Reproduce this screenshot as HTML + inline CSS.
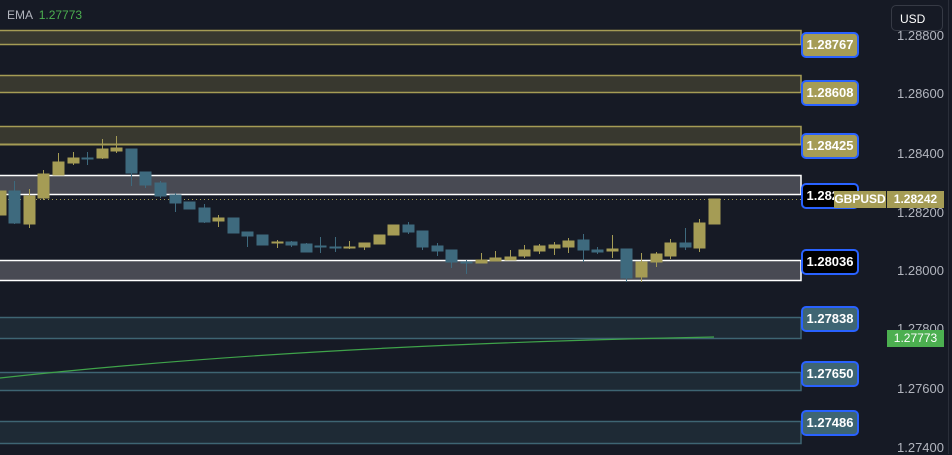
<!DOCTYPE html>
<html><head><meta charset="utf-8"><style>
html,body{margin:0;padding:0;background:#161a25;width:952px;height:454px;overflow:hidden;font-family:"Liberation Sans",sans-serif}
.lbl{position:absolute;left:801px;width:54px;height:22px;border:2px solid #2962ff;border-radius:5px;color:#fff;font-size:13px;font-weight:bold;line-height:22px;text-align:center}
.ax{position:absolute;left:897px;color:#b2b5be;font-size:13px}
</style></head><body>
<svg width="952" height="454" style="position:absolute;left:0;top:0">
<rect x="0" y="0" width="952" height="454" fill="#161a25"/>
<!-- bands -->
<g stroke-width="1.5">
<rect x="-2" y="30.5" width="803" height="14" fill="#38382f" stroke="#a59c55"/>
<rect x="-2" y="75.5" width="803" height="17" fill="#38382f" stroke="#a59c55"/>
<rect x="-2" y="126.5" width="803" height="18" fill="#38382f" stroke="#a59c55"/>
<rect x="-2" y="175.5" width="803" height="19" fill="#484a53" stroke="#ffffff"/>
<rect x="-2" y="260.5" width="803" height="20" fill="#484a53" stroke="#ffffff"/>
<rect x="-2" y="317.5" width="803" height="21" fill="#1e2a35" stroke="#3e6573"/>
<rect x="-2" y="372.5" width="803" height="18" fill="#1e2a35" stroke="#3e6573"/>
<rect x="-2" y="421.5" width="803" height="22" fill="#1e2a35" stroke="#3e6573"/>
</g>
<line x1="0" y1="144.5" x2="801" y2="144.5" stroke="#a59c55" stroke-width="2"/>
<line x1="0" y1="199.5" x2="834" y2="199.5" stroke="#a59c55" stroke-width="1" stroke-dasharray="1 3"/>
<!-- candles -->
<g fill="#a59c55" stroke="#a59c55" stroke-width="1">
<rect x="0" y="191" width="6" height="24"/>
<line x1="29.5" y1="189" x2="29.5" y2="228"/><rect x="24" y="196" width="11" height="28"/>
<line x1="43.5" y1="170" x2="43.5" y2="200"/><rect x="38" y="174" width="11" height="24"/>
<line x1="58.5" y1="153" x2="58.5" y2="175"/><rect x="53" y="162" width="11" height="13"/>
<line x1="73.5" y1="152" x2="73.5" y2="165"/><rect x="68" y="158" width="11" height="5"/>
<line x1="102.5" y1="139" x2="102.5" y2="159"/><rect x="97" y="149" width="11" height="9"/>
<line x1="116.5" y1="136" x2="116.5" y2="153"/><rect x="111" y="148" width="11" height="3"/>
<line x1="218.5" y1="215" x2="218.5" y2="227"/><rect x="213" y="218" width="11" height="3"/>
<line x1="277.5" y1="240" x2="277.5" y2="248"/><rect x="272" y="242" width="11" height="1"/>
<line x1="349.5" y1="241" x2="349.5" y2="249"/><rect x="344" y="247" width="11" height="1"/>
<line x1="364.5" y1="243" x2="364.5" y2="250"/><rect x="359" y="243" width="11" height="4"/>
<rect x="374" y="235" width="11" height="9"/>
<rect x="388" y="225" width="11" height="10"/>
<line x1="481.5" y1="253" x2="481.5" y2="263"/><rect x="476" y="260" width="11" height="3"/>
<line x1="495.5" y1="251" x2="495.5" y2="261"/><rect x="490" y="258" width="11" height="3"/>
<line x1="510.5" y1="250" x2="510.5" y2="260"/><rect x="505" y="257" width="11" height="3"/>
<line x1="524.5" y1="245" x2="524.5" y2="258"/><rect x="519" y="250" width="11" height="6"/>
<line x1="539.5" y1="244" x2="539.5" y2="254"/><rect x="534" y="246" width="11" height="5"/>
<line x1="554.5" y1="242" x2="554.5" y2="255"/><rect x="549" y="245" width="11" height="3"/>
<line x1="568.5" y1="238" x2="568.5" y2="253"/><rect x="563" y="241" width="11" height="6"/>
<line x1="612.5" y1="235" x2="612.5" y2="258"/><rect x="607" y="249" width="11" height="2"/>
<line x1="641.5" y1="253" x2="641.5" y2="282"/><rect x="636" y="262" width="11" height="15"/>
<line x1="656.5" y1="252" x2="656.5" y2="267"/><rect x="651" y="254" width="11" height="8"/>
<line x1="670.5" y1="239" x2="670.5" y2="259"/><rect x="665" y="243" width="11" height="13"/>
<line x1="699.5" y1="219" x2="699.5" y2="252"/><rect x="694" y="223" width="11" height="25"/>
<rect x="709" y="199" width="11" height="25"/>
</g>
<g fill="#3e6a7e" stroke="#3e6a7e" stroke-width="1">
<line x1="14.5" y1="181" x2="14.5" y2="224"/><rect x="9" y="191" width="11" height="32"/>
<line x1="87.5" y1="152" x2="87.5" y2="165"/><rect x="82" y="158" width="11" height="1"/>
<line x1="131.5" y1="149" x2="131.5" y2="186"/><rect x="126" y="149" width="11" height="24"/>
<line x1="145.5" y1="172" x2="145.5" y2="188"/><rect x="140" y="172" width="11" height="13"/>
<line x1="160.5" y1="181" x2="160.5" y2="198"/><rect x="155" y="183" width="11" height="13"/>
<line x1="175.5" y1="193" x2="175.5" y2="212"/><rect x="170" y="195" width="11" height="8"/>
<rect x="184" y="202" width="11" height="7"/>
<line x1="204.5" y1="204" x2="204.5" y2="223"/><rect x="199" y="208" width="11" height="14"/>
<rect x="228" y="218" width="11" height="15"/>
<line x1="247.5" y1="232" x2="247.5" y2="247"/><rect x="242" y="232" width="11" height="4"/>
<rect x="257" y="235" width="11" height="10"/>
<line x1="291.5" y1="241" x2="291.5" y2="247"/><rect x="286" y="242" width="11" height="3"/>
<line x1="306.5" y1="243" x2="306.5" y2="252"/><rect x="301" y="244" width="11" height="8"/>
<line x1="320.5" y1="237" x2="320.5" y2="253"/><rect x="315" y="246" width="11" height="1"/>
<line x1="335.5" y1="237" x2="335.5" y2="252"/><rect x="330" y="247" width="11" height="1"/>
<line x1="408.5" y1="222" x2="408.5" y2="234"/><rect x="403" y="225" width="11" height="7"/>
<line x1="422.5" y1="231" x2="422.5" y2="250"/><rect x="417" y="231" width="11" height="16"/>
<line x1="437.5" y1="243" x2="437.5" y2="256"/><rect x="432" y="246" width="11" height="5"/>
<line x1="451.5" y1="250" x2="451.5" y2="268"/><rect x="446" y="250" width="11" height="12"/>
<line x1="466.5" y1="260" x2="466.5" y2="274"/><rect x="461" y="262" width="11" height="1"/>
<line x1="583.5" y1="234" x2="583.5" y2="262"/><rect x="578" y="240" width="11" height="10"/>
<line x1="597.5" y1="247" x2="597.5" y2="254"/><rect x="592" y="250" width="11" height="2"/>
<line x1="626.5" y1="249" x2="626.5" y2="282"/><rect x="621" y="249" width="11" height="29"/>
<line x1="685.5" y1="228" x2="685.5" y2="250"/><rect x="680" y="243" width="11" height="4"/>
</g>
<path d="M0 378 Q300 345 714 337" fill="none" stroke="#3fa34a" stroke-width="1.2"/>
<line x1="948.5" y1="0" x2="948.5" y2="454" stroke="#2a2e39"/>
</svg>
<div class="lbl" style="top:32px;background:#a59c55">1.28767</div>
<div class="lbl" style="top:80px;background:#a59c55">1.28608</div>
<div class="lbl" style="top:133px;background:#a59c55">1.28425</div>
<div class="lbl" style="top:183px;background:#000">1.28250</div>
<div class="lbl" style="top:249px;background:#000">1.28036</div>
<div class="lbl" style="top:306px;background:#3e6573">1.27838</div>
<div class="lbl" style="top:361px;background:#3e6573">1.27650</div>
<div class="lbl" style="top:410px;background:#3e6573">1.27486</div>
<div class="ax" style="top:28px">1.28800</div>
<div class="ax" style="top:86px">1.28600</div>
<div class="ax" style="top:146px">1.28400</div>
<div class="ax" style="top:205px">1.28200</div>
<div class="ax" style="top:263px">1.28000</div>
<div class="ax" style="top:321px">1.27800</div>
<div class="ax" style="top:381px">1.27600</div>
<div class="ax" style="top:440px">1.27400</div>
<div style="position:absolute;left:834px;top:191px;width:52px;height:17px;background:#a59c55;color:#fff;font-size:12px;font-weight:bold;line-height:17px;text-align:center">GBPUSD</div>
<div style="position:absolute;left:887px;top:191px;width:57px;height:17px;background:#a59c55;color:#fff;font-size:12px;font-weight:bold;line-height:17px;text-align:center">1.28242</div>
<div style="position:absolute;left:887px;top:330px;width:57px;height:17px;background:#4caf50;color:#fff;font-size:12px;line-height:17px;text-align:center">1.27773</div>
<div style="position:absolute;left:891px;top:5px;width:52px;height:26px;border:1px solid #363a45;border-radius:5px;background:#161a25;color:#fff;font-size:12px;line-height:26px;padding-left:8px;box-sizing:border-box">USD</div>
<div style="position:absolute;left:7px;top:8px;font-size:12px;color:#b2b5be">EMA <span style="color:#4caf50;margin-left:3px">1.27773</span></div>
</body></html>
